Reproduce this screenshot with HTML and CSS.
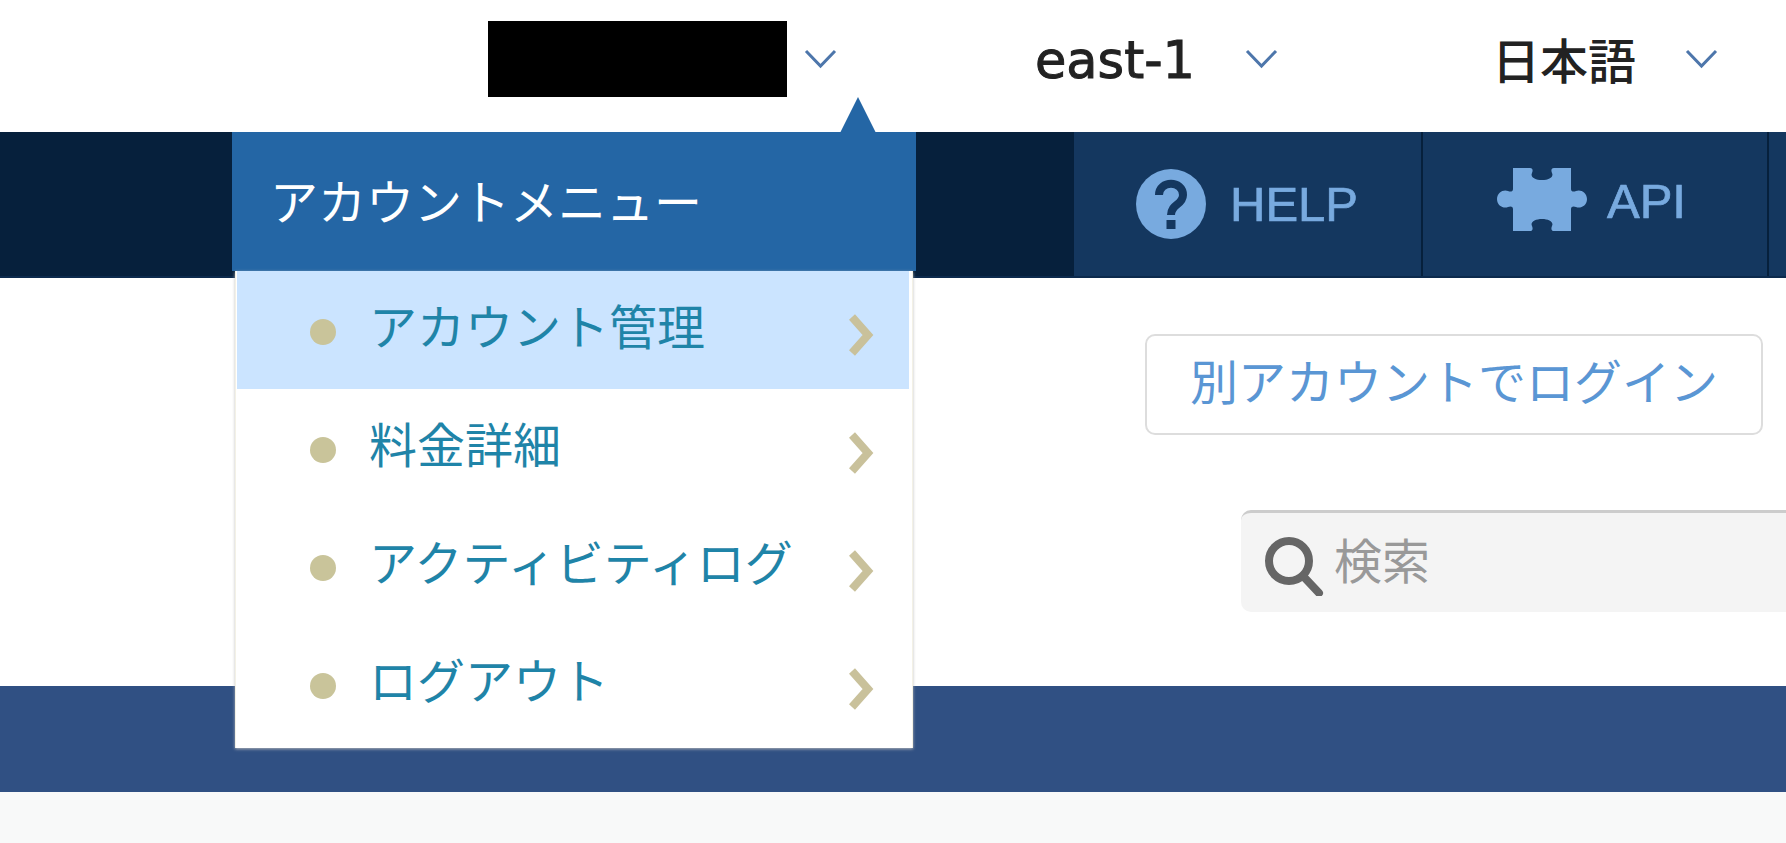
FILE: index.html
```html
<!DOCTYPE html>
<html lang="ja">
<head>
    <meta charset="UTF-8">
    <title>アカウントメニュー</title>
    <link rel="stylesheet" href="styles.css">
</head>
<body>
    <!-- top bar -->
    <div class="top-bar">
        <div class="account-name"></div>
        <svg class="caret caret-account" viewBox="0 0 33 21"><path d="M2 3 L16.5 18 L31 3"/></svg>
        <div class="region">east-1</div>
        <svg class="caret caret-region" viewBox="0 0 33 21"><path d="M2 3 L16.5 18 L31 3"/></svg>
        <div class="lang">日本語</div>
        <svg class="caret caret-lang" viewBox="0 0 33 21"><path d="M2 3 L16.5 18 L31 3"/></svg>
    </div>

    <!-- nav -->
    <div class="nav">
        <div class="nav-space"></div>
        <div class="nav-item nav-help">
            <svg class="help-icon" viewBox="0 0 70 70">
                <circle cx="35" cy="35" r="35" fill="#78aadf"/>
                <path d="M23 26 C23 11 47 11 47 26 C47 36 35 35 35 46" fill="none" stroke="#14375f" stroke-width="8"/>
                <rect x="30.500" y="51" width="9" height="9" fill="#14375f"/>
            </svg>
            <span>HELP</span>
        </div>
        <div class="nav-item nav-api">
            <svg class="puzzle-icon" viewBox="0 0 90 68">
                <path d="M16 3 H33 C36 3 36 6 35 8 C33 12 38 15 45 15 C52 15 57 12 55 8 C54 6 54 3 57 3 H74 V24 C74 27 77 27 79 26 C83 24 90 27 90 34 C90 41 83 44 79 42 C77 41 74 41 74 44 V66 H57 C54 66 54 63 55 61 C57 57 52 54 45 54 C38 54 33 57 35 61 C36 63 36 66 33 66 H16 V44 C16 41 13 41 11 42 C7 44 0 41 0 34 C0 27 7 24 11 26 C13 27 16 27 16 24 Z" fill="#78aadf"/>
            </svg>
            <span>API</span>
        </div>
        <div class="nav-end"></div>
    </div>

    <!-- content -->
    <div class="content">
        <div class="login-button">別アカウントでログイン</div>
        <div class="search">
            <svg class="search-icon" viewBox="0 0 60 60">
                <circle cx="25" cy="25" r="20" fill="none" stroke="#666" stroke-width="8"/>
                <path d="M39 40 L55 57" stroke="#666" stroke-width="8" stroke-linecap="round"/>
            </svg>
            <span class="search-text">検索</span>
        </div>
    </div>

    <div class="band"></div>
    <div class="footer"></div>

    <!-- account menu -->
    <div class="menu">
        <div class="menu-arrow"></div>
        <div class="menu-title">アカウントメニュー</div>
        <div class="menu-list">
            <div class="menu-row active">
                <span class="dot"></span>
                <span class="menu-label">アカウント管理</span>
                <svg class="chevron" viewBox="0 0 27 42"><path d="M5 3 L21 21 L5 39"/></svg>
            </div>
            <div class="menu-row">
                <span class="dot"></span>
                <span class="menu-label">料金詳細</span>
                <svg class="chevron" viewBox="0 0 27 42"><path d="M5 3 L21 21 L5 39"/></svg>
            </div>
            <div class="menu-row">
                <span class="dot"></span>
                <span class="menu-label">アクティビティログ</span>
                <svg class="chevron" viewBox="0 0 27 42"><path d="M5 3 L21 21 L5 39"/></svg>
            </div>
            <div class="menu-row">
                <span class="dot"></span>
                <span class="menu-label">ログアウト</span>
                <svg class="chevron" viewBox="0 0 27 42"><path d="M5 3 L21 21 L5 39"/></svg>
            </div>
        </div>
    </div>
</body>
</html>
```

FILE: styles.css
```css
body {
    margin: 0;
    height: 100vh;
    overflow: hidden;
    display: flex;
    flex-direction: column;
    background: #fff;
    font-family: "Noto Sans CJK JP", "Noto Sans", sans-serif;
}

.top-bar {
    height: 132px;
    display: flex;
    align-items: center;
    padding-right: 68px;
    justify-content: flex-end;
}

.account-name {
    width: 299px;
    height: 76px;
    margin-top: -14px;
    background: #000;
}

.caret {
    width: 33px;
    height: 21px;
    margin-top: -15px;
    fill: none;
    stroke: #4d76ab;
    stroke-width: 3;
}

.caret-account {
    margin-left: 17px;
    margin-right: 198px;
}

.caret-region {
    margin-left: 52px;
    margin-right: 214px;
}

.caret-lang {
    margin-left: 49px;
}

.region {
    width: 158px;
    font-family: "DejaVu Sans", sans-serif;
    font-size: 51px;
    -webkit-text-stroke: 1px #222;
    color: #222;
    margin-top: -12px;
    white-space: nowrap;
}

.lang {
    font-size: 48px;
    font-weight: 500;
    color: #222;
    margin-top: -16px;
}

.nav {
    height: 146px;
    display: flex;
    background: #14375f;
    border-bottom: 2px solid #0c2a4d;
    box-sizing: border-box;
}

.nav-space {
    flex: 1;
    background: #06203c;
}

.nav-item {
    display: flex;
    align-items: center;
    border-right: 2px solid #06203c;
    box-sizing: border-box;
    color: #78aadf;
    font-family: "Liberation Sans", sans-serif;
    font-size: 49px;
    -webkit-text-stroke: 0.7px #78aadf;
}

.nav-help {
    width: 349px;
    padding-left: 62px;
    gap: 24px;
}

.nav-api {
    width: 346px;
    padding-left: 74px;
    gap: 20px;
}

.nav-end {
    width: 17px;
}

.help-icon {
    width: 70px;
    height: 70px;
}

.puzzle-icon {
    width: 90px;
    height: 68px;
    margin-top: -10px;
}

.nav-api span {
    margin-top: -6px;
}

.content {
    height: 408px;
    display: flex;
    flex-direction: column;
    align-items: flex-end;
    padding-top: 56px;
    box-sizing: border-box;
}

.login-button {
    width: 618px;
    height: 101px;
    margin-right: 23px;
    padding-bottom: 11px;
    box-sizing: border-box;
    display: flex;
    align-items: center;
    justify-content: center;
    border: 2px solid #ddd;
    border-radius: 10px;
    color: #5a96d4;
    font-size: 48px;
}

.search {
    width: 545px;
    height: 102px;
    margin-top: 75px;
    box-sizing: border-box;
    display: flex;
    align-items: center;
    padding-left: 23px;
    gap: 10px;
    background: #f4f4f4;
    border-top: 3px solid #ccc;
    border-radius: 10px 0 0 10px;
}

.search-icon {
    width: 60px;
    height: 60px;
    margin-top: 6px;
}

.search-text {
    font-size: 48px;
    color: #999;
    margin-top: -9px;
}

.band {
    height: 106px;
    background: #305083;
}

.footer {
    flex: 1;
    background: #f8f9f9;
}

/* dropdown over the page */
.menu {
    position: absolute;
    top: 132px;
    left: 232px;
    width: 684px;
}

.menu-arrow {
    position: absolute;
    top: -35px;
    left: 608px;
    border-left: 18px solid transparent;
    border-right: 18px solid transparent;
    border-bottom: 36px solid #2466a5;
}

.menu-title {
    height: 139px;
    display: flex;
    align-items: center;
    padding-left: 38px;
    padding-bottom: 6px;
    box-sizing: border-box;
    background: #2466a5;
    color: #fff;
    font-size: 48px;
}

.menu-list {
    margin: 0 3px;
    padding: 0 3px 5px 1px;
    background: #fff;
    border-left: 1px solid #f3f1e6;
    border-right: 1px solid #f3f1e6;
    box-shadow: 0 1px 3px rgba(190, 190, 190, 0.9);
}

.menu-row {
    height: 118px;
    display: flex;
    align-items: center;
    padding: 0 35px 0 73px;
    color: #1f84a8;
    font-size: 48px;
}

.menu-row.active {
    background: #cbe4ff;
}

.dot {
    width: 26px;
    height: 26px;
    border-radius: 50%;
    background: #c9c49a;
    margin-right: 33px;
    margin-top: 4px;
}

.menu-label {
    flex: 1;
    white-space: nowrap;
    margin-top: -13px;
}

.chevron {
    width: 27px;
    height: 42px;
    margin-top: 9px;
    fill: none;
    stroke: #c9c19b;
    stroke-width: 8;
}
```
